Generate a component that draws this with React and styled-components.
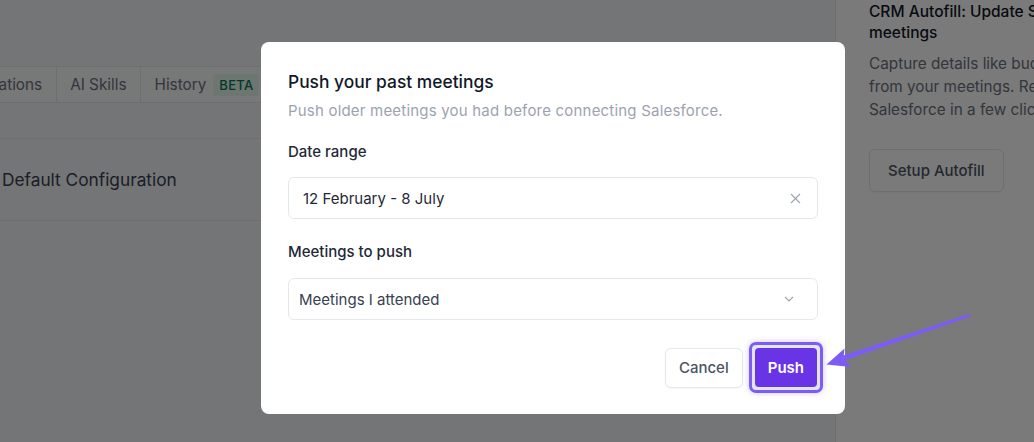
import React from 'react';
import styled, { createGlobalStyle } from 'styled-components';

const GlobalStyle = createGlobalStyle`
	* {
		box-sizing: border-box;
	}

	body {
		margin: 0;
		font-family: Inter, 'Noto Sans', sans-serif;
		background: #f3f4f6;
		overflow: hidden;
	}
`;

const Page = styled.div`
	display: flex;
	height: 100vh;
	overflow: hidden;
`;

const Main = styled.main`
	flex: none;
	width: 835px;
	padding-top: 66px;
`;

const Tabs = styled.nav`
	display: flex;
	height: 37px;
	margin-left: -57px;
	border-top: 1px solid #e5e7eb;
	border-bottom: 1px solid #e5e7eb;
	background: #f9fafb;
`;

const Tab = styled.div`
	display: flex;
	align-items: center;
	gap: 7px;
	padding: 0 13.5px;
	font-size: 15.3px;
	color: #6b7280;
	border-right: 1px solid #e5e7eb;
`;

const Badge = styled.span`
	padding: 3px 6px;
	border-radius: 4px;
	background: #e6f7ef;
	color: #047857;
	font-size: 13px;
	font-weight: 500;
	letter-spacing: 0.3px;
`;

const ConfigRow = styled.div`
	display: flex;
	align-items: center;
	height: 83px;
	margin-top: 35px;
	padding-left: 2px;
	border-top: 1px solid #e5e7eb;
	border-bottom: 1px solid #e5e7eb;
	font-size: 17.3px;
	color: #374151;
`;

const Sidebar = styled.aside`
	flex: 1;
	padding: 1px 0 0 33px;
	background: #fff;
	border-left: 1px solid #e5e7eb;
`;

const SideTitle = styled.h3`
	margin: 0;
	font-size: 15.5px;
	font-weight: 500;
	line-height: 21px;
	color: #111827;
	white-space: nowrap;
`;

const SideText = styled.p`
	margin: 9px 0 0;
	font-size: 15.3px;
	line-height: 23px;
	color: #6b7280;
	white-space: nowrap;
`;

const GhostButton = styled.button`
	display: flex;
	align-items: center;
	height: ${(p) => p.$height || 43}px;
	margin-top: ${(p) => p.$top || 0}px;
	padding: 0 ${(p) => p.$pad || 18}px;
	border: 1px solid #e5e7eb;
	border-radius: 6px;
	background: #fff;
	box-shadow: 0 1px 2px rgba(0, 0, 0, 0.04);
	font-family: inherit;
	font-size: 15px;
	font-weight: 500;
	color: #4b5563;
`;

const Overlay = styled.div`
	position: fixed;
	inset: 0;
	padding: 42px 0 0 261px;
	background: rgba(0, 0, 0, 0.52);
`;

const Modal = styled.section`
	width: 584px;
	padding: 28px 27px 21px;
	background: #fff;
	border-radius: 8px;
`;

const Title = styled.h2`
	margin: 0;
	font-size: 17.4px;
	font-weight: 500;
	line-height: 24px;
	color: #111827;
`;

const Subtitle = styled.p`
	margin: 6px 0 0;
	font-size: 15px;
	line-height: 22px;
	letter-spacing: 0.2px;
	color: #9ca3af;
`;

const Label = styled.div`
	margin-top: ${(p) => p.$top}px;
	font-size: 15px;
	font-weight: 500;
	line-height: 22px;
	color: #1f2937;
`;

const Field = styled.div`
	display: flex;
	align-items: center;
	justify-content: space-between;
	height: 42px;
	margin-top: ${(p) => p.$top}px;
	padding: 0 ${(p) => p.$right}px 0 ${(p) => p.$left}px;
	border: 1px solid #e5e7eb;
	border-radius: 6px;
	font-size: 15px;
	color: ${(p) => p.$color};
`;

const Footer = styled.div`
	display: flex;
	align-items: center;
	justify-content: flex-end;
	gap: 6px;
	margin: 22px -5px 0 0;
`;

const Highlight = styled.div`
	padding: 3px;
	border: 3px solid #7c5cf5;
	border-radius: 7px;
	background: #e4e4e7;
	box-shadow: 0 0 6px rgba(124, 92, 245, 0.35);
`;

const PrimaryButton = styled.button`
	height: 39px;
	padding: 0 13px;
	border: none;
	border-radius: 4px;
	background: #6834e6;
	font-family: inherit;
	font-size: 15px;
	font-weight: 600;
	color: #fff;
`;

const Arrow = styled.svg`
	position: fixed;
	inset: 0;
	width: 100%;
	height: 100%;
	pointer-events: none;
`;

function App() {
	return (
		<>
			<GlobalStyle />
			<Page>
				<Main>
					<Tabs>
						<Tab>Integrations</Tab>
						<Tab>AI Skills</Tab>
						<Tab>
							History <Badge>BETA</Badge>
						</Tab>
					</Tabs>
					<ConfigRow>Default Configuration</ConfigRow>
				</Main>

				<Sidebar>
					<SideTitle>
						CRM Autofill: Update Salesforce after
						<br />
						meetings
					</SideTitle>
					<SideText>
						Capture details like budget, timeline
						<br />
						from your meetings. Review and sync to
						<br />
						Salesforce in a few clicks.
					</SideText>
					<GhostButton $top={28}>Setup Autofill</GhostButton>
				</Sidebar>
			</Page>

			<Overlay>
				<Modal>
					<Title>Push your past meetings</Title>
					<Subtitle>
						Push older meetings you had before connecting Salesforce.
					</Subtitle>

					<Label $top={19}>Date range</Label>
					<Field $top={14} $left={14} $right={16} $color="#1f2937">
						12 February - 8 July
						<svg width="11" height="11" viewBox="0 0 11 11">
							<path
								d="M1 1l9 9M10 1l-9 9"
								stroke="#9ca3af"
								strokeWidth="1.1"
								fill="none"
							/>
						</svg>
					</Field>

					<Label $top={22}>Meetings to push</Label>
					<Field $top={15} $left={10} $right={23} $color="#374151">
						Meetings I attended
						<svg width="10" height="6" viewBox="0 0 10 6">
							<path
								d="M1 1l4 4 4-4"
								stroke="#9ca3af"
								strokeWidth="1.1"
								fill="none"
							/>
						</svg>
					</Field>

					<Footer>
						<GhostButton $height={40} $pad={13}>
							Cancel
						</GhostButton>
						<Highlight>
							<PrimaryButton>Push</PrimaryButton>
						</Highlight>
					</Footer>
				</Modal>
			</Overlay>

			{/* annotation arrow pointing at the Push button */}
			<Arrow viewBox="0 0 1034 442">
				<polygon
					points="970.5,316.5 969.5,313.8 842.5,355.8 844.2,360.6"
					fill="#7c5cf5"
				/>
				<polygon
					points="826.5,364.5 844.5,348.5 843.5,358 851,367"
					fill="#7c5cf5"
				/>
			</Arrow>
		</>
	);
}

export default App;
